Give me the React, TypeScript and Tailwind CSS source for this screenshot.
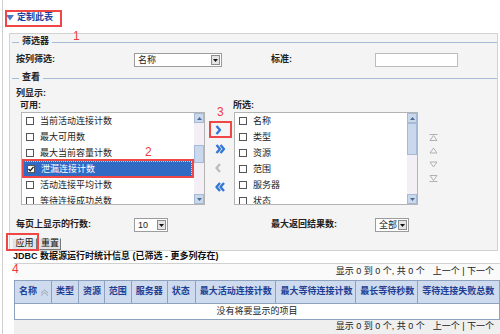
import type { ReactNode } from "react";

const AVAILABLE = ["当前活动连接计数", "最大可用数", "最大当前容量计数", "泄漏连接计数", "活动连接平均计数", "等待连接成功总数"];
const CHOSEN = ["名称", "类型", "资源", "范围", "服务器", "状态"];

const COLUMNS = [
  { label: "名称", w: "w-[37px]", sort: true },
  { label: "类型", w: "w-[27px]" },
  { label: "资源", w: "w-[26px]" },
  { label: "范围", w: "w-[27px]" },
  { label: "服务器", w: "w-[36px]" },
  { label: "状态", w: "w-[28px]" },
  { label: "最大活动连接计数", w: "w-[81px]" },
  { label: "最大等待连接计数", w: "w-[80px]" },
  { label: "最长等待秒数", w: "w-[62px]" },
  { label: "等待连接失败总数", w: "w-[81px]" },
];

function Select({ value, width }: { value: string; width: string }) {
  return (
    <div className={`flex h-[14px] items-stretch border border-[#9c9c9c] bg-white ${width}`}>
      <span className="flex-1 pl-[3px] text-[9px] leading-[12px] font-normal text-[#222]">{value}</span>
      <span className="m-[1px] flex w-[9px] items-center justify-center border border-[#8c8c8c] bg-[#e4e4e4]">
        <svg width="5" height="3" viewBox="0 0 5 3">
          <path d="M0 0h5L2.5 3z" fill="#111" />
        </svg>
      </span>
    </div>
  );
}

function Legend({ label }: { label: string }) {
  return (
    <div className="flex h-[12px] items-center">
      <span className="ml-[1px] h-px w-[7px] bg-[#a7bad6]" />
      <span className="px-[3px] text-[9px] font-bold text-[#222]">{label}</span>
      <span className="h-px flex-1 bg-[#a7bad6]" />
    </div>
  );
}

function Checkbox({ checked }: { checked?: boolean }) {
  return (
    <span className="flex h-[8px] w-[8px] shrink-0 items-center justify-center border border-[#555] bg-white">
      {checked ? (
        <svg width="6" height="6" viewBox="0 0 6 6">
          <path d="M0.5 3l1.7 1.8L5.5 0.8" stroke="#111" strokeWidth="1.3" fill="none" />
        </svg>
      ) : null}
    </span>
  );
}

function ScrollArrow({ down }: { down?: boolean }) {
  return (
    <span className="flex h-[10px] items-center justify-center border border-[#a6b9d6] bg-[#cad8ec]">
      <svg width="5" height="3" viewBox="0 0 5 3">
        <path d={down ? "M0 0h5L2.5 3z" : "M0 3h5L2.5 0z"} fill="#4d6a96" />
      </svg>
    </span>
  );
}

function ListBox({ items, selected, thumbTop, thumbH }: { items: string[]; selected?: number; thumbTop: string; thumbH: string }) {
  return (
    <div className="flex h-[93px] w-[184px] border border-[#b4b4b4] bg-white">
      <div className="flex-1 overflow-hidden">
        {items.map((item, i) => (
          <div
            key={item}
            className={
              i === selected
                ? "ml-[1px] mr-[2px] flex h-[16px] items-center gap-[6px] border border-dotted border-[#c9d6f0] bg-[#316ac5] pl-[3px] text-white"
                : "flex h-[16px] items-center gap-[6px] pl-[4px] text-[#222]"
            }
          >
            <Checkbox checked={i === selected} />
            <span className="text-[9px] leading-none">{item}</span>
          </div>
        ))}
      </div>
      <div className="flex w-[10px] flex-col bg-[#f4eff5]">
        <ScrollArrow />
        <div className="relative flex-1">
          <span className={`absolute left-0 right-0 border border-[#a6b9d6] bg-[#c9d8ed] ${thumbTop} ${thumbH}`} />
        </div>
        <ScrollArrow down />
      </div>
    </div>
  );
}

function Chevron({ double, left, color }: { double?: boolean; left?: boolean; color: string }) {
  const one = left ? "M5 1L1.5 5L5 9" : "M1.5 1L5 5L1.5 9";
  const two = left ? "M9 1L5.5 5L9 9" : "M5.5 1L9 5L5.5 9";
  return (
    <svg width="11" height="10" viewBox="0 0 11 10">
      <path d={one} stroke={color} strokeWidth="2.4" fill="none" strokeLinejoin="round" />
      {double ? <path d={two} stroke={color} strokeWidth="2.4" fill="none" strokeLinejoin="round" /> : null}
    </svg>
  );
}

function OrderIcon({ d }: { d: string }) {
  return (
    <svg width="9" height="7" viewBox="0 0 9 7">
      <path d={d} stroke="#a9a9a9" strokeWidth="0.9" fill="none" />
    </svg>
  );
}

function Button({ children, width }: { children: ReactNode; width: string }) {
  return (
    <span className={`flex h-[12px] items-center justify-center border border-t-[#eee] border-l-[#eee] border-r-[#777] border-b-[#777] bg-[#e3e3e3] text-[9px] text-[#111] ${width}`}>
      {children}
    </span>
  );
}

function Pager() {
  return (
    <div className="flex items-center justify-end gap-[8px] pr-[6px] text-[9px] text-[#222]">
      <span>显示 0 到 0 个, 共 0 个</span>
      <span>上一个 | 下一个</span>
    </div>
  );
}

function Red({ children, className }: { children: ReactNode; className: string }) {
  return <span className={`absolute text-[12px] leading-none font-normal text-[#f03c3c] ${className}`}>{children}</span>;
}

export default function App() {
  return (
    <div className="relative h-[334px] w-[500px] overflow-hidden bg-white font-['Liberation_Sans','Noto_Sans_CJK_SC',sans-serif]">
      <div className="ml-[2px] flex h-full flex-col border-l border-[#cfcfcf]">
        {/* header link */}
        <div className="mt-[12px] flex h-[12px] items-center gap-[3px] pl-[3px]">
          <svg width="8" height="6" viewBox="0 0 8 6">
            <path d="M0 0h8L4 5.5z" fill="#4a78c8" />
          </svg>
          <span className="text-[9px] font-bold text-[#1a3fa0]">定制此表</span>
        </div>

        {/* panel */}
        <div className="ml-[6px] mt-[9px] flex h-[220px] w-[489px] flex-col border border-[#d2d2d2] bg-[#f4f4f4]">
          <div className="mt-[2px] pl-[1px]">
            <Legend label="筛选器" />
          </div>

          <div className="mt-[5px] flex h-[14px] items-center pl-[6px] text-[9px] font-bold text-[#222]">
            <span className="w-[118px]">按列筛选:</span>
            <Select value="名称" width="w-[88px]" />
            <span className="w-[49px]" />
            <span className="w-[104px]">标准:</span>
            <span className="h-[14px] w-[83px] border border-[#bcbcbc] bg-white" />
          </div>

          <div className="mt-[5px] pl-[1px]">
            <Legend label="查看" />
          </div>

          <div className="mt-[3px] h-[12px] pl-[6px] text-[9px] font-bold leading-[12px] text-[#222]">列显示:</div>

          <div className="flex h-[12px] text-[9px] font-bold leading-[12px] text-[#222]">
            <span className="w-[223px] pl-[10px]">可用:</span>
            <span>所选:</span>
          </div>

          <div className="mt-[1px] flex pl-[11px]">
            <ListBox items={AVAILABLE} selected={3} thumbTop="top-[22px]" thumbH="h-[18px]" />
            <div className="flex w-[29px] flex-col items-center pl-[1px] pt-[13px]">
              <span className="h-[10px]">
                <Chevron color="#3377d6" />
              </span>
              <span className="mt-[9px] h-[10px]">
                <Chevron double color="#3377d6" />
              </span>
              <span className="mt-[9px] h-[10px]">
                <Chevron left color="#bdbdbd" />
              </span>
              <span className="mt-[9px] h-[10px]">
                <Chevron double left color="#3377d6" />
              </span>
            </div>
            <ListBox items={CHOSEN} thumbTop="top-0" thumbH="h-[32px]" />
            <div className="ml-[11px] flex flex-col pt-[22px]">
              <OrderIcon d="M0.5 0.5h8M1 6.5h7L4.5 1.5z" />
              <span className="mt-[6px]">
                <OrderIcon d="M1 6h7L4.5 1z" />
              </span>
              <span className="mt-[7px]">
                <OrderIcon d="M1 1h7L4.5 6z" />
              </span>
              <span className="mt-[7px]">
                <OrderIcon d="M1 0.5h7L4.5 5.5zM0.5 6.5h8" />
              </span>
            </div>
          </div>

          <div className="mt-[13px] flex h-[14px] items-center pl-[6px] text-[9px] font-bold text-[#222]">
            <span className="w-[118px]">每页上显示的行数:</span>
            <Select value="10" width="w-[34px]" />
            <span className="w-[103px]" />
            <span className="w-[104px]">最大返回结果数:</span>
            <Select value="全部" width="w-[34px]" />
          </div>

          <div className="mt-[6px] flex gap-[2px] pl-[2px]">
            <Button width="w-[25px]">应用</Button>
            <Button width="w-[22px]">重置</Button>
          </div>
        </div>

        {/* results */}
        <div className="flex h-[12px] items-center pl-[10px] text-[9px] font-bold text-[#111]">
          JDBC 数据源运行时统计信息 (已筛选 - 更多列存在)
        </div>

        <div className="ml-[11px] flex flex-col">
          <div className="flex h-[17px] items-center justify-end border-t border-[#d0d0d0] bg-[#fafafa]">
            <Pager />
          </div>
          <div className="flex h-[24px] border border-[#8da2bf] bg-[#cedaed]">
            {COLUMNS.map((col) => (
              <div
                key={col.label}
                className={`flex items-center gap-[3px] border-r border-[#8da2bf] pl-[4px] text-[9px] font-bold whitespace-nowrap text-[#1e3f93] last:border-r-0 ${col.w}`}
              >
                {col.label}
                {col.sort ? (
                  <svg width="9" height="7" viewBox="0 0 9 7">
                    <path d="M1 4L4.5 1L8 4M1 6.5L4.5 3.5L8 6.5" stroke="#9aa4b4" strokeWidth="1" fill="none" />
                  </svg>
                ) : null}
              </div>
            ))}
          </div>
          <div className="flex h-[16px] items-center justify-center border border-t-0 border-[#8da2bf] bg-white text-[9px] text-[#222]">
            没有将要显示的项目
          </div>
          <div className="flex h-[14px] items-center justify-end bg-[#efefef]">
            <Pager />
          </div>
        </div>
      </div>

      {/* annotations */}
      <span className="absolute left-[5px] top-[10px] h-[17px] w-[57px] border-2 border-[#f04646]" />
      <Red className="left-[73px] top-[30px]">1</Red>
      <span className="absolute left-[22px] top-[159px] h-[19px] w-[172px] border-2 border-[#f04646]" />
      <Red className="left-[145px] top-[146px]">2</Red>
      <span className="absolute left-[209px] top-[121px] h-[17px] w-[23px] border-2 border-[#f04646]" />
      <Red className="left-[217px] top-[106px]">3</Red>
      <span className="absolute left-[6px] top-[233px] h-[18px] w-[33px] border-2 border-[#f04646]" />
      <Red className="left-[12px] top-[263px]">4</Red>
    </div>
  );
}
